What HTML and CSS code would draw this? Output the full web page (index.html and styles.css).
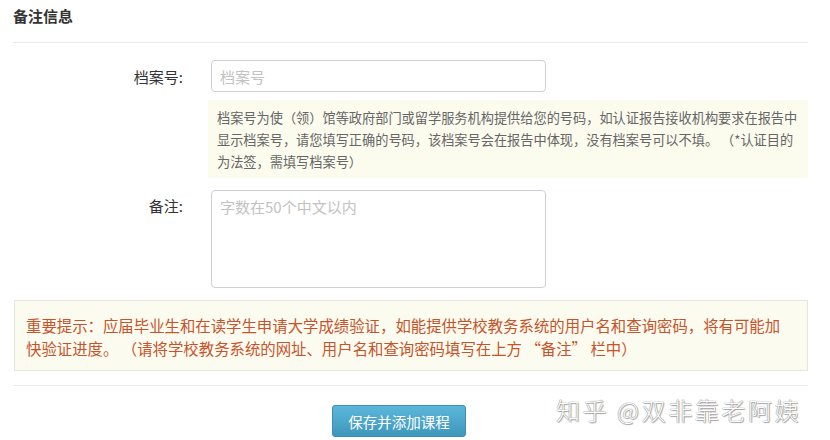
FILE: index.html
```html
<!DOCTYPE html>
<html lang="zh">
<head>
<meta charset="utf-8">
<link rel="stylesheet" href="styles.css">
</head>
<body>
<div class="panel">
  <div class="title">备注信息</div>
  <div class="row first">
    <label class="label">档案号:</label>
    <div class="field"><input class="input" placeholder="档案号"></div>
  </div>
  <div class="hint">档案号为使（领）馆等政府部门或留学服务机构提供给您的号码，如认证报告接收机构要求在报告中<br>显示档案号，请您填写正确的号码，该档案号会在报告中体现，没有档案号可以不填。 （*认证目的<br>为法签，需填写档案号）</div>
  <div class="row second">
    <label class="label top">备注:</label>
    <div class="field"><textarea class="textarea" placeholder="字数在50个中文以内"></textarea></div>
  </div>
  <div class="warning">重要提示：应届毕业生和在读学生申请大学成绩验证，如能提供学校教务系统的用户名和查询密码，将有可能加<br>快验证进度。 （请将学校教务系统的网址、用户名和查询密码填写在上方 “备注” 栏中）</div>
  <div class="actions">
    <button class="btn">保存并添加课程</button>
  </div>
</div>
<div class="watermark">知乎 @双非靠老阿姨</div>
</body>
</html>
```
FILE: styles.css
```css
* { box-sizing: border-box; }
html, body {
  margin: 0;
  padding: 0;
  background: #fff;
  width: 830px;
  height: 440px;
  overflow: hidden;
  font-family: "Noto Sans CJK SC", "Noto Sans", sans-serif;
  color: #333;
}
.panel {
  padding: 0 22px 0 13px;
}
.title {
  padding-top: 6px;
  padding-bottom: 16px;
  line-height: 20px;
  font-size: 15px;
  font-weight: bold;
  color: #333;
  border-bottom: 1px solid #e8e8e8;
}
.row {
  display: flex;
  align-items: center;
}
.row.first { margin-top: 17px; }
.row.second { margin-top: 12px; align-items: flex-start; }
.label {
  width: 170px;
  text-align: right;
  font-size: 15px;
  color: #333;
  flex: none;
}
.label.top { padding-top: 5px; line-height: 22px; }
.field { margin-left: 28px; }
.input, .textarea {
  display: block;
  width: 335px;
  border: 1px solid #cfcfcf;
  border-radius: 4px;
  background: #fff;
  font-family: inherit;
  font-size: 15px;
  color: #333;
  padding: 0 8px;
  outline: none;
}
.input { height: 32px; }
.textarea {
  height: 98px;
  resize: none;
  padding-top: 5px;
  line-height: 22px;
}
.input::placeholder, .textarea::placeholder { color: #c2c2c2; }
.hint {
  margin: 8px 0 0 195px;
  padding: 7px 4px 5px 9px;
  background: #fbfbee;
  font-size: 13.2px;
  line-height: 22px;
  color: #666;
  white-space: nowrap;
}
.warning {
  margin-top: 12px;
  margin-left: 1px;
  border: 1px solid #e6e6dc;
  background: #fcfbf0;
  padding: 13px 4px 10px 11px;
  font-size: 15.4px;
  line-height: 23px;
  color: #c7532b;
  white-space: nowrap;
}
.actions {
  margin-top: 14px;
  border-top: 1px solid #ececec;
  padding-top: 19px;
  padding-left: 319px;
}
.btn {
  display: block;
  width: 134px;
  height: 32px;
  border: 1px solid #3b8fb3;
  border-radius: 3px;
  background: linear-gradient(#5bb7d9, #3f97bc);
  color: #fff;
  font-family: inherit;
  font-size: 14.5px;
  padding: 0;
}
.watermark {
  position: absolute;
  left: 556px;
  top: 394px;
  font-size: 24px;
  line-height: 32px;
  font-weight: 300;
  color: #fff;
  letter-spacing: 2.6px;
  text-shadow: 0 0 1px #888, 0 0 1px #888, 1px 1px 1px #aaa;
}
```
